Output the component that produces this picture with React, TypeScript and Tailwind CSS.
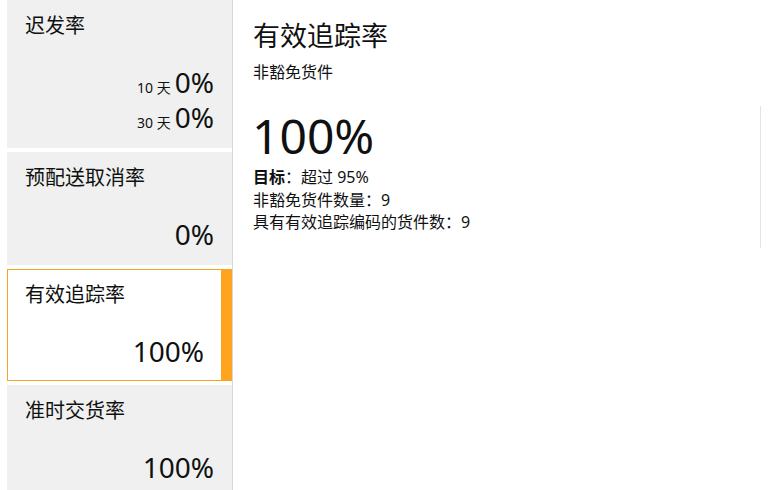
import React from "react";

const font = { fontFamily: '"Noto Sans", "Noto Sans CJK SC", sans-serif' };

function GrayCard({ title, h, children }: { title: string; h: string; children: React.ReactNode }) {
  return (
    <div className={`bg-[#eff0ef] ${h} pl-[18px] pr-[18px] pt-[13px] flex flex-col shrink-0`}>
      <div className="text-[20px] leading-[26px]">{title}</div>
      <div className="mt-[26px] flex flex-col items-end">{children}</div>
    </div>
  );
}

function DayRow({ label, value }: { label: string; value: string }) {
  return (
    <div className="h-[35px] leading-[35px] text-right whitespace-nowrap overflow-visible">
      <span className="text-[14px] mr-[4px]">{label}</span>
      <span className="text-[28px]">{value}</span>
    </div>
  );
}

export default function App() {
  return (
    <div className="w-[769px] h-[490px] overflow-hidden bg-white text-[#0f1111] flex" style={font}>
      <div className="w-[233px] h-full border-r border-[#d9d9d9] pl-[7px] flex flex-col gap-[4px] shrink-0">
        <GrayCard title="迟发率" h="h-[148px]">
          <DayRow label="10 天" value="0%" />
          <DayRow label="30 天" value="0%" />
        </GrayCard>
        <GrayCard title="预配送取消率" h="h-[113px]">
          <div className="text-[28px] leading-[35px]">0%</div>
        </GrayCard>
        <div className="h-[112px] border border-[#f5a623] bg-white flex shrink-0">
          <div className="flex-1 pl-[17px] pr-[17px] pt-[12px] flex flex-col">
            <div className="text-[20px] leading-[26px]">有效追踪率</div>
            <div className="mt-[26px] text-right text-[28px] leading-[35px]">100%</div>
          </div>
          <div className="w-[10px] bg-[#ffa41c]" />
        </div>
        <GrayCard title="准时交货率" h="flex-1">
          <div className="text-[28px] leading-[35px]">100%</div>
        </GrayCard>
      </div>
      <div className="flex-1 pl-[20px] pt-[18px] flex flex-col">
        <div className="text-[27px] leading-[36px]">有效追踪率</div>
        <div className="mt-[7px] text-[16px] leading-[22px]">非豁免货件</div>
        <div className="mt-[23px] flex">
          <div className="w-[507px] shrink-0">
            <div className="text-[48px] leading-[60px] ml-[-1px]">100%</div>
            <div className="text-[16px] leading-[22.5px]">
              <div>
                <span className="font-bold">目标</span>：超过 95%
              </div>
              <div>非豁免货件数量：9</div>
              <div>具有有效追踪编码的货件数：9</div>
            </div>
          </div>
          <div className="flex-1 h-[142px] border-l border-[#e3e3e3]" />
        </div>
      </div>
    </div>
  );
}
